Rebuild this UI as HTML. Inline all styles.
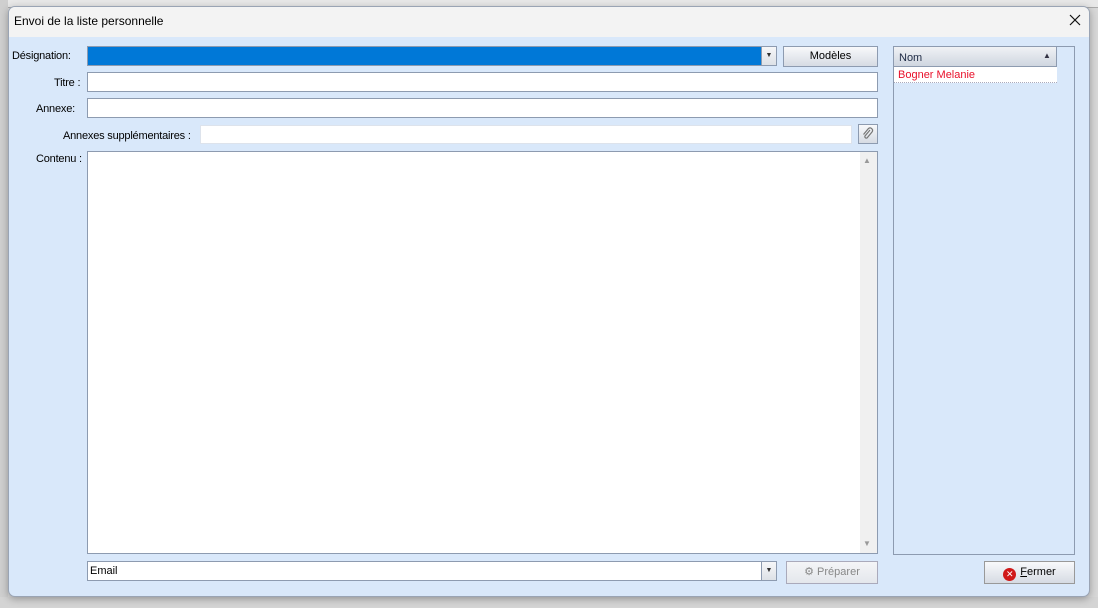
<!DOCTYPE html>
<html><head><meta charset="utf-8"><style>
*{box-sizing:border-box;margin:0;padding:0}
body{width:1098px;height:608px;overflow:hidden;background:#d8d8d8;font-family:"Liberation Sans",sans-serif;font-size:11px;color:#000;position:relative}
.a{position:absolute}
.dlg{left:8px;top:6px;width:1082px;height:591px;background:#d9e8fa;border:1px solid #9aa4b4;border-radius:7px;overflow:hidden;box-shadow:0 2px 8px rgba(0,0,0,.3)}
.c{position:absolute;left:-1px;top:-1px;width:1082px;height:591px}
.tb{left:0;top:0;width:1082px;height:31px;background:#f3f3f3}
.in{background:#fff;border:1px solid #8d9bb0}
.lbl{font-size:11px;text-align:right;letter-spacing:-0.2px}
.btn{border:1px solid #8d9bb0;background:linear-gradient(#f8f9fb,#d6dbe3);text-align:center;font-size:11px;line-height:18px}
</style></head><body>
<div class="a" style="left:0;top:0;width:1098px;height:8px;background:#e8e8e8;border-bottom:1px solid #aaa"></div>
<div class="a" style="left:0;top:0;width:8px;height:608px;background:#cfcfcf"></div>
<div class="a" style="left:0;top:597px;width:1098px;height:11px;background:#d4d4d4"></div>
<div class="a dlg"><div class="c">
 <div class="a tb"></div>
 <div class="a" style="left:6px;top:8px;font-size:12px">Envoi de la liste personnelle</div>
 <svg class="a" style="left:1061px;top:8px" width="12" height="12" viewBox="0 0 12 12"><path d="M1 1L11 11M11 1L1 11" stroke="#111" stroke-width="1.2"/></svg>

 <div class="a lbl" style="left:4px;top:44px">Désignation:</div>
 <div class="a in" style="left:79px;top:40px;width:690px;height:20px;background:#0078d7"></div>
 <div class="a" style="left:753px;top:41px;width:15px;height:18px;background:linear-gradient(#f6f7f9,#dde1e7);border-left:1px solid #8d9bb0;font-size:7px;text-align:center;line-height:18px;color:#333">▼</div>
 <div class="a btn" style="left:775px;top:40px;width:95px;height:21px">Modèles</div>

 <div class="a lbl" style="left:46px;top:71px">Titre :</div>
 <div class="a in" style="left:79px;top:66px;width:791px;height:20px"></div>
 <div class="a lbl" style="left:28px;top:97px">Annexe:</div>
 <div class="a in" style="left:79px;top:92px;width:791px;height:20px"></div>
 <div class="a lbl" style="left:55px;top:124px">Annexes supplémentaires :</div>
 <div class="a in" style="left:192px;top:119px;width:652px;height:19px;border-color:#dde3ec"></div>
 <div class="a btn" style="left:850px;top:118px;width:20px;height:20px"><svg width="14" height="14" viewBox="0 0 14 14" style="margin-top:2px"><path d="M9 3L4 9a1.5 1.5 0 0 0 2 2L11 5a2.5 2.5 0 0 0-3.5-3.5L2.5 7.5" fill="none" stroke="#777" stroke-width="1.2"/></svg></div>

 <div class="a lbl" style="left:28px;top:147px">Contenu :</div>
 <div class="a in" style="left:79px;top:145px;width:791px;height:403px"></div>
 <div class="a" style="left:852px;top:146px;width:17px;height:401px;background:#f0f0f0"></div>
 <div class="a" style="left:855px;top:150px;font-size:8px;color:#999">▲</div>
 <div class="a" style="left:855px;top:533px;font-size:8px;color:#999">▼</div>

 <div class="a in" style="left:79px;top:555px;width:690px;height:20px"></div>
 <div class="a" style="left:82px;top:559px">Email</div>
 <div class="a" style="left:753px;top:556px;width:15px;height:18px;background:linear-gradient(#f6f7f9,#dde1e7);border-left:1px solid #8d9bb0;font-size:7px;text-align:center;line-height:18px;color:#333">▼</div>
 <div class="a btn" style="left:778px;top:555px;width:92px;height:23px;color:#888;line-height:21px;background:linear-gradient(#f4f5f7,#e4e7ec);border-color:#aab">⚙ Préparer</div>

 <div class="a" style="left:885px;top:40px;width:182px;height:509px;border:1px solid #8d9bb0"></div>
 <div class="a" style="left:886px;top:41px;width:163px;height:20px;background:linear-gradient(#f0f2f5,#cfd6e0);border-right:1px solid #8d9bb0;border-bottom:1px solid #8d9bb0"></div>
 <div class="a" style="left:891px;top:46px;color:#1e2a44">Nom</div>
 <div class="a" style="left:1035px;top:45px;font-size:8px;color:#334">▲</div>
 <div class="a" style="left:886px;top:61px;width:163px;height:16px;background:#fff;border-bottom:1px dotted #aab"></div>
 <div class="a" style="left:890px;top:63px;color:#e8102a">Bogner Melanie</div>

 <div class="a btn" style="left:976px;top:555px;width:91px;height:23px;line-height:21px;border-color:#999"><span style="display:inline-block;width:13px;height:13px;border-radius:50%;background:#d01818;color:#fff;font-size:9px;line-height:13px;vertical-align:-2px;margin-right:4px">✕</span><u>F</u>ermer</div>
</div></div>
</body></html>
